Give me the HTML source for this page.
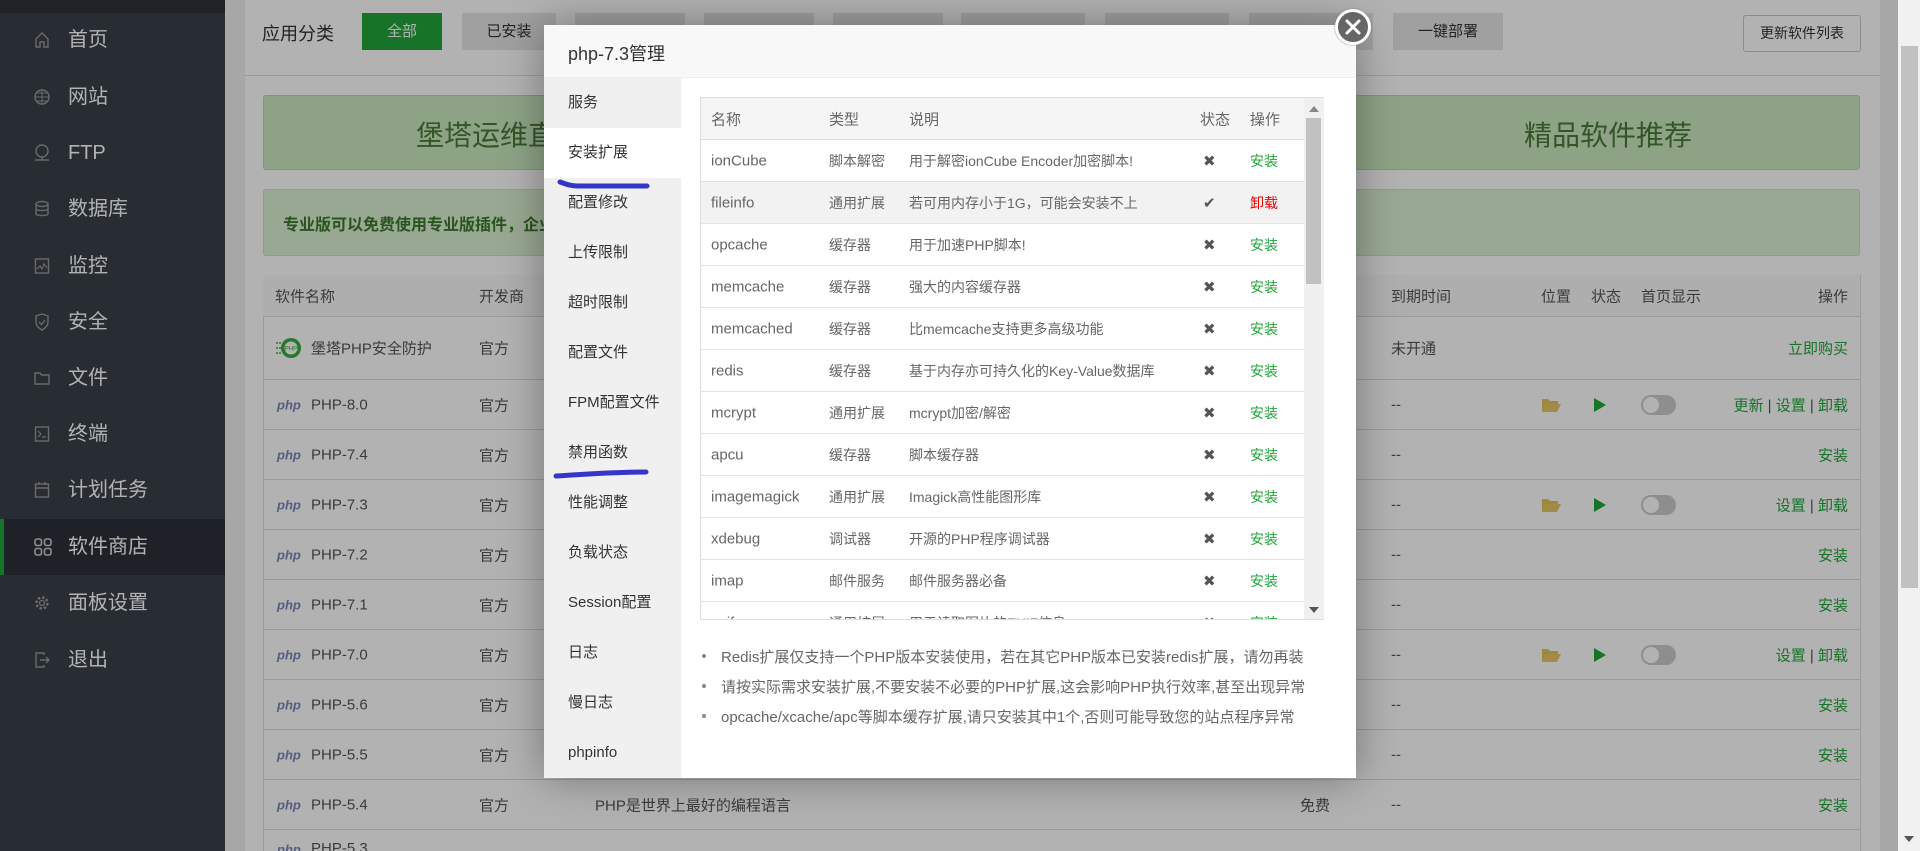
<!DOCTYPE html>
<html style="overflow:hidden;height:851px"><head><meta charset="utf-8">
<style>
*{margin:0;padding:0;box-sizing:border-box}
body{width:1920px;height:851px;overflow:hidden;position:relative;font-family:"Liberation Sans","Noto Sans CJK SC",sans-serif;background:#f0f0f0;color:#333}
.a{position:absolute;white-space:nowrap}
#side{position:absolute;left:0;top:0;width:225px;height:851px;background:#3a3f4a}
#side .top{position:absolute;left:0;top:0;width:225px;height:13px;background:#2d3139}
.mi{position:absolute;left:0;width:225px;height:56px;color:#fff;font-size:20px;line-height:56px}
.mi span{position:absolute;left:68px}
.mi svg{position:absolute;left:34px;top:19px}
.mi.act{background:#2c3039;border-left:4px solid #20a53a}
.btn{position:absolute;top:13px;height:37px;background:#e6e6e6;font-size:15px;line-height:37px;text-align:center;color:#333}
.row{position:absolute;left:263px;width:1597px;border-bottom:1px solid #ddd;font-size:15px;color:#555}
.row .a{top:50%;transform:translateY(-50%)}
.php{font-style:italic;font-weight:bold;color:#7a86b8;font-size:13px;font-family:"Liberation Sans",sans-serif}
.g{color:#20a53a}
#clip{position:absolute;left:0;top:0;width:1920px;height:851px;overflow:hidden}
#ov{position:absolute;left:0;top:0;width:1898px;height:851px;background:rgba(0,0,0,0.3)}
#modal{position:absolute;left:544px;top:25px;width:812px;height:753px;background:#fff;box-shadow:0 0 40px rgba(0,0,0,0.35)}
.nav{position:absolute;left:0;width:137px;height:50px;line-height:50px;padding-left:24px;font-size:15px;color:#333}
.tr{position:absolute;left:0;width:603px;height:42px;border-bottom:1px solid #e4e4e4;font-size:15px;color:#666}
.tr .a{top:50%;transform:translateY(-50%)}
.x{color:#555;font-size:15px}
.note{position:absolute;left:177px;font-size:15px;color:#666;white-space:nowrap}
.note:before{content:"";position:absolute;left:-19px;top:8px;width:4px;height:4px;border-radius:50%;background:#888}
</style></head><body><div id="clip">
<div id="side"><div class="top"></div>
<div class="mi" style="top:12px"><svg width="16" height="18" viewBox="0 0 16 18"><path d="M2 8L8 2L14 8V16H10V11H6V16H2Z" fill="none" stroke="#999" stroke-width="1.4"/></svg><span>首页</span></div>
<div class="mi" style="top:69px"><svg width="16" height="18" viewBox="0 0 16 18"><circle cx="8" cy="9" r="7" fill="none" stroke="#999" stroke-width="1.4"/><path d="M1 9H15M8 2V16M3 5H13M3 13H13" stroke="#999" stroke-width="1"/></svg><span>网站</span></div>
<div class="mi" style="top:125px"><svg width="16" height="18" viewBox="0 0 16 18"><circle cx="8" cy="7" r="6" fill="none" stroke="#999" stroke-width="1.4"/><path d="M1 16H15M8 13V16" stroke="#999" stroke-width="1.4"/></svg><span>FTP</span></div>
<div class="mi" style="top:181px"><svg width="16" height="18" viewBox="0 0 16 18"><ellipse cx="8" cy="4" rx="6" ry="2.5" fill="none" stroke="#999" stroke-width="1.4"/><path d="M2 4V14C2 16 14 16 14 14V4M2 9C2 11 14 11 14 9" fill="none" stroke="#999" stroke-width="1.4"/></svg><span>数据库</span></div>
<div class="mi" style="top:238px"><svg width="16" height="18" viewBox="0 0 16 18"><rect x="1.5" y="2" width="13" height="14" fill="none" stroke="#999" stroke-width="1.4"/><path d="M3 12L6 9L8 12L10 7L13 11" fill="none" stroke="#999" stroke-width="1.2"/></svg><span>监控</span></div>
<div class="mi" style="top:294px"><svg width="16" height="18" viewBox="0 0 16 18"><path d="M8 1L14 3V9C14 13 11 15 8 17C5 15 2 13 2 9V3Z" fill="none" stroke="#999" stroke-width="1.4"/><path d="M5 9L7.5 11.5L11 7" fill="none" stroke="#999" stroke-width="1.4"/></svg><span>安全</span></div>
<div class="mi" style="top:350px"><svg width="16" height="18" viewBox="0 0 16 18"><path d="M1 4H6L7.5 6H15V15H1Z" fill="none" stroke="#999" stroke-width="1.4"/></svg><span>文件</span></div>
<div class="mi" style="top:406px"><svg width="16" height="18" viewBox="0 0 16 18"><rect x="1.5" y="2" width="13" height="14" fill="none" stroke="#999" stroke-width="1.4"/><path d="M4 6L7 9L4 12M8 12H12" fill="none" stroke="#999" stroke-width="1.2"/></svg><span>终端</span></div>
<div class="mi" style="top:462px"><svg width="16" height="18" viewBox="0 0 16 18"><rect x="1.5" y="3" width="13" height="13" fill="none" stroke="#999" stroke-width="1.4"/><path d="M1.5 7H14.5M5 1V4M11 1V4" stroke="#999" stroke-width="1.4"/></svg><span>计划任务</span></div>
<div class="mi act" style="top:519px"><svg width="18" height="18" viewBox="0 0 18 18" style="left:30px"><rect x="1" y="1" width="6.5" height="6.5" rx="2" fill="none" stroke="#ccc" stroke-width="1.6"/><rect x="10.5" y="1" width="6.5" height="6.5" rx="2" fill="none" stroke="#ccc" stroke-width="1.6"/><rect x="1" y="10.5" width="6.5" height="6.5" rx="2" fill="none" stroke="#ccc" stroke-width="1.6"/><rect x="10.5" y="10.5" width="6.5" height="6.5" rx="2" fill="none" stroke="#ccc" stroke-width="1.6"/></svg><span style="left:64px">软件商店</span></div>
<div class="mi" style="top:575px"><svg width="16" height="18" viewBox="0 0 16 18"><circle cx="8" cy="9" r="5.5" fill="none" stroke="#999" stroke-width="2.5" stroke-dasharray="2.5 1.8"/><circle cx="8" cy="9" r="2.5" fill="none" stroke="#999" stroke-width="1.3"/></svg><span>面板设置</span></div>
<div class="mi" style="top:632px"><svg width="16" height="18" viewBox="0 0 16 18"><path d="M10 4V2H2V16H10V14" fill="none" stroke="#999" stroke-width="1.4"/><path d="M6 9H15M12 6L15 9L12 12" fill="none" stroke="#999" stroke-width="1.4"/></svg><span>退出</span></div>
</div>

<div class="a" style="left:245px;top:0;width:1635px;height:851px;background:#fff"></div>
<div class="a" style="left:245px;top:75px;width:1635px;height:1px;background:#e0e0e0"></div>
<div class="a" style="left:262px;top:20px;font-size:18px;color:#333">应用分类</div>
<div class="btn" style="left:362px;width:80px;background:#20a53a;color:#fff">全部</div>
<div class="btn" style="left:462px;width:94px">已安装</div>
<div class="btn" style="left:575px;width:110px"></div>
<div class="btn" style="left:704px;width:110px"></div>
<div class="btn" style="left:833px;width:110px"></div>
<div class="btn" style="left:961px;width:124px"></div>
<div class="btn" style="left:1105px;width:124px"></div>
<div class="btn" style="left:1249px;width:124px"></div>
<div class="btn" style="left:1393px;width:110px">一键部署</div>
<div class="btn" style="left:1743px;top:15px;width:118px;background:#fff;border:1px solid #c8c8c8;border-radius:3px;font-size:14px;line-height:35px">更新软件列表</div>

<div class="a" style="left:263px;top:95px;width:1597px;height:75px;background:#cceac1;border:1px solid #b5d8a8;border-radius:3px"></div>
<div class="a" style="left:416px;top:114px;font-size:28px;color:#4a7a3a">堡塔运维直播间</div>
<div class="a" style="left:1524px;top:114px;font-size:28px;color:#4a7a3a">精品软件推荐</div>
<div class="a" style="left:263px;top:189px;width:1597px;height:67px;background:#dcf1d2;border:1px solid #c7e5b9;border-radius:3px"></div>
<div class="a" style="left:283px;top:211px;font-size:16px;font-weight:bold;color:#3a7a2a">专业版可以免费使用专业版插件，企业版可以免费使用专业版及企业版插件</div>

<div class="a" style="left:263px;top:275px;width:1598px;height:576px;border:1px solid #ddd;border-bottom:none"></div>
<div class="row" style="top:275px;height:42px;background:#fafafa"><span class="a" style="left:12px">软件名称</span><span class="a" style="left:216px">开发商</span><span class="a" style="left:1128px">到期时间</span><span class="a" style="left:1278px">位置</span><span class="a" style="left:1328px">状态</span><span class="a" style="left:1378px">首页显示</span><span class="a" style="right:12px">操作</span></div>
<div class="row" style="top:317px;height:63px"><svg class="a" style="left:12px" width="26" height="26" viewBox="0 0 26 26"><circle cx="16" cy="13" r="10" fill="#3cab3e"/><circle cx="16" cy="13" r="6.5" fill="#fff"/><text x="16" y="15.5" font-size="6" text-anchor="middle" fill="#3cab3e" font-family="Liberation Sans">PHP</text><path d="M1 8H6M1 13H6M1 18H6" stroke="#3cab3e" stroke-width="1.5" stroke-dasharray="2 1"/></svg><span class="a" style="left:48px">堡塔PHP安全防护</span><span class="a" style="left:216px">官方</span><span class="a" style="left:1128px">未开通</span><span class="a g" style="right:12px">立即购买</span></div>
<div id="rows"></div>
<script>
var d=[["8.0",2],["7.4",0],["7.3",1],["7.2",0],["7.1",0],["7.0",1],["5.6",0],["5.5",0],["5.4",3]];
var h="";
d.forEach(function(r,i){var t=380+i*50;
h+='<div class="row" style="top:'+t+'px;height:50px"><span class="a php" style="left:14px">php</span><span class="a" style="left:48px">PHP-'+r[0]+'</span><span class="a" style="left:216px">官方</span>';
if(r[1]==3)h+='<span class="a" style="left:332px">PHP是世界上最好的编程语言</span><span class="a" style="left:1037px">免费</span>';
h+='<span class="a" style="left:1128px">--</span>';
if(r[1]==1||r[1]==2){h+='<svg class="a" style="left:1278px" width="20" height="16" viewBox="0 0 20 16"><path d="M1 2H7L9 4H17V7H5L1 15Z" fill="#e0c35a"/><path d="M4 7H20L16 15H1Z" fill="#e8c867"/></svg><svg class="a" style="left:1331px" width="12" height="14" viewBox="0 0 12 14"><path d="M0 0L12 7L0 14Z" fill="#20a53a"/></svg><span class="a" style="left:1378px;width:35px;height:20px;border-radius:10px;background:#ccc"><span style="position:absolute;left:2px;top:2px;width:16px;height:16px;border-radius:50%;background:#fff"></span></span>';
h+='<span class="a g" style="right:12px">'+(r[1]==2?'更新 <span style="color:#555">|</span> ':'')+'设置 <span style="color:#555">|</span> 卸载</span>';}
else h+='<span class="a g" style="right:12px">安装</span>';
h+='</div>';});
h+='<div class="row" style="top:830px;height:50px;border-bottom:none"><span class="a php" style="left:14px;top:12px;transform:none">php</span><span class="a" style="left:48px;top:10px;transform:none">PHP-5.3</span></div>';
document.getElementById("rows").innerHTML=h;
</script>
<div id="ov"></div>
<div class="a" style="left:1898px;top:0;width:22px;height:851px;background:#f1f1f1"></div>
<div class="a" style="left:1901px;top:46px;width:17px;height:542px;background:#c1c1c1"></div>
<div class="a" style="left:1904px;top:836px;width:0;height:0;border-left:5px solid transparent;border-right:5px solid transparent;border-top:6px solid #555"></div>

<div id="modal">
<div class="a" style="left:0;top:0;width:812px;height:53px;background:#f8f8f8;border-bottom:1px solid #eee"></div>
<div class="a" style="left:24px;top:15px;font-size:18px;color:#333">php-7.3管理</div>
<div class="a" style="left:0;top:53px;width:137px;height:700px;background:#f0f0f0"></div>
<div class="nav" style="top:53px">服务</div>
<div class="nav" style="top:103px;background:#fff">安装扩展</div>
<div class="nav" style="top:153px">配置修改</div>
<div class="nav" style="top:203px">上传限制</div>
<div class="nav" style="top:253px">超时限制</div>
<div class="nav" style="top:303px">配置文件</div>
<div class="nav" style="top:353px">FPM配置文件</div>
<div class="nav" style="top:403px">禁用函数</div>
<div class="nav" style="top:453px">性能调整</div>
<div class="nav" style="top:503px">负载状态</div>
<div class="nav" style="top:553px">Session配置</div>
<div class="nav" style="top:603px">日志</div>
<div class="nav" style="top:653px">慢日志</div>
<div class="nav" style="top:703px">phpinfo</div>
<svg class="a" style="left:0;top:0" width="140" height="460"><path d="M16 157C22 159 26 161 34 161L103 161" fill="none" stroke="#3535c8" stroke-width="5" stroke-linecap="round"/><path d="M12 451C32 450 62 447 102 447" fill="none" stroke="#3535c8" stroke-width="5" stroke-linecap="round"/></svg>

<div class="a" style="left:156px;top:72px;width:624px;height:523px;overflow:hidden;border:1px solid #ddd;border-right:none">
<div class="tr" style="top:0;background:#f5f5f5;border-bottom:1px solid #ddd"><span class="a" style="left:10px">名称</span><span class="a" style="left:128px">类型</span><span class="a" style="left:208px">说明</span><span class="a" style="left:499px">状态</span><span class="a" style="left:549px">操作</span></div>
<div id="ext"></div>
<div class="a" style="left:603px;top:0;width:20px;height:523px;background:#f0f0f0"></div>
<div class="a" style="left:608px;top:8px;width:0;height:0;border-left:5px solid transparent;border-right:5px solid transparent;border-bottom:6px solid #888"></div>
<div class="a" style="left:605px;top:20px;width:15px;height:166px;background:#c1c1c1"></div>
<div class="a" style="left:608px;top:509px;width:0;height:0;border-left:5px solid transparent;border-right:5px solid transparent;border-top:6px solid #555"></div>
</div>
<div class="note" style="top:621px">Redis扩展仅支持一个PHP版本安装使用，若在其它PHP版本已安装redis扩展，请勿再装</div>
<div class="note" style="top:651px">请按实际需求安装扩展,不要安装不必要的PHP扩展,这会影响PHP执行效率,甚至出现异常</div>
<div class="note" style="top:681px">opcache/xcache/apc等脚本缓存扩展,请只安装其中1个,否则可能导致您的站点程序异常</div>
</div>
<script>
var e=[["ionCube","脚本解密","用于解密ionCube Encoder加密脚本!"],["fileinfo","通用扩展","若可用内存小于1G，可能会安装不上",1],["opcache","缓存器","用于加速PHP脚本!"],["memcache","缓存器","强大的内容缓存器"],["memcached","缓存器","比memcache支持更多高级功能"],["redis","缓存器","基于内存亦可持久化的Key-Value数据库"],["mcrypt","通用扩展","mcrypt加密/解密"],["apcu","缓存器","脚本缓存器"],["imagemagick","通用扩展","Imagick高性能图形库"],["xdebug","调试器","开源的PHP程序调试器"],["imap","邮件服务","邮件服务器必备"],["exif","通用扩展","用于读取图片的EXIF信息"]];
var s="";e.forEach(function(r,i){var t=42+i*42;
s+='<div class="tr" style="top:'+t+'px;'+(r[3]?'background:#f2f2f2':'')+'"><span class="a" style="left:10px">'+r[0]+'</span><span class="a" style="left:128px;font-size:14px">'+r[1]+'</span><span class="a" style="left:208px;font-size:14px">'+r[2]+'</span><span class="a x" style="left:502px">'+(r[3]?'✔':'✖')+'</span><span class="a" style="left:549px;font-size:14px;color:'+(r[3]?'#e00':'#20a53a')+'">'+(r[3]?'卸载':'安装')+'</span></div>';});
document.getElementById("ext").innerHTML=s;
</script>
<div class="a" style="left:1335px;top:9px;width:36px;height:36px;border-radius:50%;background:#666;border:3px solid #fff;box-shadow:0 0 2px #888"></div>
<svg class="a" style="left:1335px;top:9px" width="36" height="36"><path d="M12 12L24 24M24 12L12 24" stroke="#fff" stroke-width="3" stroke-linecap="round"/></svg>
</div></body></html>
